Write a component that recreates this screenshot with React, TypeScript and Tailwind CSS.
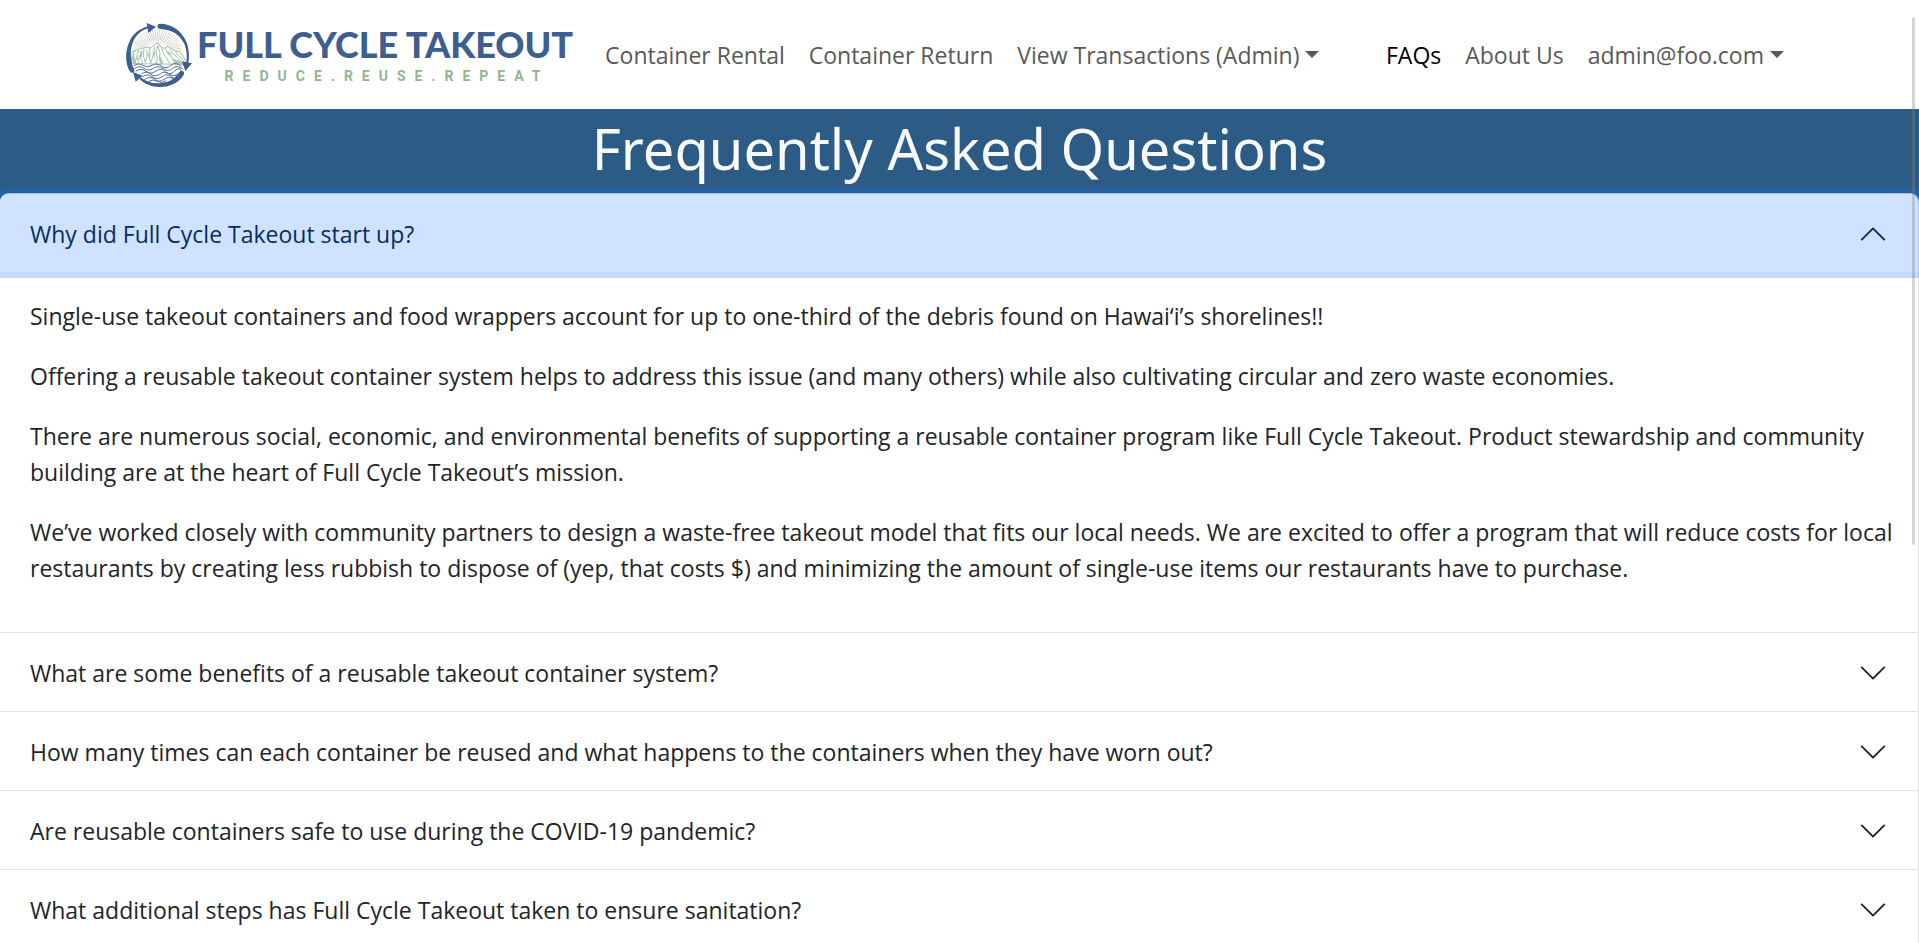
import { useState } from "react";

const rays = Array.from({ length: 31 }, (_, i) => {
  const a = Math.PI + (Math.PI * i) / 30;
  const inner = i % 2 === 0 ? 32 : 40;
  return {
    x1: 142 + Math.cos(a) * inner,
    y1: 126 + Math.sin(a) * inner,
    x2: 142 + Math.cos(a) * 73,
    y2: 126 + Math.sin(a) * 73,
  };
});

const faqs: { question: string; answer: string[] }[] = [
  {
    question: "Why did Full Cycle Takeout start up?",
    answer: [
      "Single-use takeout containers and food wrappers account for up to one-third of the debris found on Hawai‘i’s shorelines!!",
      "Offering a reusable takeout container system helps to address this issue (and many others) while also cultivating circular and zero waste economies.",
      "There are numerous social, economic, and environmental benefits of supporting a reusable container program like Full Cycle Takeout. Product stewardship and community building are at the heart of Full Cycle Takeout’s mission.",
      "We’ve worked closely with community partners to design a waste-free takeout model that fits our local needs. We are excited to offer a program that will reduce costs for local restaurants by creating less rubbish to dispose of (yep, that costs $) and minimizing the amount of single-use items our restaurants have to purchase.",
    ],
  },
  { question: "What are some benefits of a reusable takeout container system?", answer: [] },
  {
    question:
      "How many times can each container be reused and what happens to the containers when they have worn out?",
    answer: [],
  },
  { question: "Are reusable containers safe to use during the COVID-19 pandemic?", answer: [] },
  { question: "What additional steps has Full Cycle Takeout taken to ensure sanitation?", answer: [] },
];

function LogoMark() {
  return (
    <svg viewBox="39 33 210 198" className="h-[66px] w-[70px] shrink-0" fill="none" aria-hidden="true">
      <g stroke="#c4c1b8" strokeWidth="2">
        {rays.map((r, i) => (
          <line key={i} x1={r.x1} y1={r.y1} x2={r.x2} y2={r.y2} />
        ))}
      </g>
      <path
        d="M64 158 L66 122 L78 118 L88 114 L98 112 L108 109 L120 111 L130 104 L137 97 L146 97 L152 108 L162 112 L172 107 L184 112 L194 120 L206 122 L216 130 L228 152 L224 160 Z"
        fill="#ffffff"
        stroke="#8fb596"
        strokeWidth="2.5"
        strokeLinejoin="round"
      />
      <g stroke="#8fb596" strokeWidth="2.5" strokeLinecap="round" strokeLinejoin="round">
        <path d="M72 122 L70 140 L76 156 L80 134 L86 118 M84 154 L88 136 L94 122 L92 142 L98 156 M102 114 L100 134 L106 154 L112 132 L110 116" />
        <path d="M120 112 L116 134 L122 156 L128 138 L134 108 M138 158 L142 140 L138 122 L144 104 L150 126 L148 144 L154 160" />
        <path d="M156 112 L160 128 L170 142 L178 156 M166 112 L174 128 L188 142 L198 158 M180 114 L188 128 L202 138 L214 156 M196 122 L206 134 L220 148" />
      </g>
      <g fill="#a9c9ae">
        <path d="M66 140 L72 128 L76 156 L68 156 Z M92 120 L98 118 L96 134 L90 138 Z M116 128 L122 122 L120 142 Z M130 128 L136 118 L134 146 Z M148 134 L154 140 L160 158 L150 158 Z" />
        <path d="M184 142 L198 146 L222 154 L222 164 L196 158 Z M170 118 L182 126 L186 134 L174 128 Z M80 144 L84 134 L86 150 Z" />
      </g>
      <g stroke="#566f97" strokeWidth="3" strokeLinecap="round">
        <path d="M72 164 Q84 154 98 163 T126 163 T154 165 T182 163 T214 166" />
        <path d="M74 172 Q88 162 102 172 T130 172 T160 173 T188 172 T218 174" />
        <path d="M78 180 Q94 170 108 181 T138 180 T166 182 T194 180 T214 182" />
        <path d="M96 188 Q108 178 122 189 T150 189 T178 189 T204 188" />
        <path d="M98 197 Q112 186 126 197 T156 197 T184 197 T200 194" />
        <path d="M104 205 Q120 194 134 205 T162 205 T188 203" />
        <path d="M116 211 Q128 203 142 211 T168 210" />
      </g>
      <g fill="#3d5f8f">
        <path d="M61 184 C44 158 44 116 62 84 C74 64 92 52 114 46 L116 51 C94 58 80 70 71 88 C59 114 59 150 73 176 C75 183 66 188 61 184 Z" />
        <path d="M110 36 L138 47 L115 66 Z" />
        <path d="M150 38 C184 38 214 58 229 92 C237 112 239 134 235 156 L229 155 C232 134 230 116 223 98 C209 70 184 56 152 54 C140 54 140 38 150 38 Z" />
        <path d="M216 151 L246 157 L226 180 Z" />
        <path d="M222 190 C208 216 178 229 148 228 C124 227 104 219 88 203 L92 199 C108 212 126 218 148 217 C174 216 196 204 208 184 C213 176 226 180 222 190 Z" />
        <path d="M69 183 L98 194 L77 212 Z" />
      </g>
    </svg>
  );
}

function Caret() {
  return (
    <svg viewBox="0 0 14 7" className="h-[7px] w-[14px]" fill="currentColor" aria-hidden="true">
      <path d="M0 0h14L7 7z" />
    </svg>
  );
}

function Chevron({ open }: { open: boolean }) {
  return (
    <svg
      viewBox="0 0 16 16"
      className={open ? "size-[30px] shrink-0 rotate-180" : "size-[30px] shrink-0"}
      fill="currentColor"
      aria-hidden="true"
    >
      <path
        fillRule="evenodd"
        d="M1.646 4.646a.5.5 0 0 1 .708 0L8 10.293l5.646-5.647a.5.5 0 0 1 .708.708l-6 6a.5.5 0 0 1-.708 0l-6-6a.5.5 0 0 1 0-.708z"
      />
    </svg>
  );
}

function Navbar() {
  return (
    <header className="flex h-[109px] items-center justify-between pr-[135px] pl-[123px] text-[23px] leading-9 text-[#595959]">
      <div className="flex items-center">
        <a href="#home" className="flex items-center gap-1 pr-5" aria-label="Full Cycle Takeout home">
          <LogoMark />
          <span className="flex flex-col items-center gap-1.5">
            <span className="font-[Lato] text-[36px] leading-9 font-black whitespace-nowrap text-[#3d5f8f]">
              FULL CYCLE TAKEOUT
            </span>
            <span className="pl-1 font-[Roboto] text-[14px] leading-4 font-bold tracking-[9px] whitespace-nowrap text-[#93b591]">
              REDUCE.REUSE.REPEAT
            </span>
          </span>
        </a>
        <nav className="flex whitespace-nowrap" aria-label="Containers">
          <a href="#rental" className="px-3">Container Rental</a>
          <a href="#return" className="px-3">Container Return</a>
          <button type="button" className="flex items-center gap-1.5 px-3">
            View Transactions (Admin)
            <Caret />
          </button>
        </nav>
      </div>
      <nav className="flex whitespace-nowrap" aria-label="Account">
        <a href="#faqs" aria-current="page" className="px-3 text-black">FAQs</a>
        <a href="#about" className="px-3">About Us</a>
        <button type="button" className="flex items-center gap-1.5 pl-3">
          admin@foo.com
          <Caret />
        </button>
      </nav>
    </header>
  );
}

export default function App() {
  const [openIndex, setOpenIndex] = useState(0);

  return (
    <div className="relative h-screen overflow-hidden bg-white font-['Open_Sans',sans-serif] text-[#212529]">
      <div className="h-full overflow-x-hidden overflow-y-auto [scrollbar-width:none]">
        <Navbar />
        <main className="bg-[#2c5b85]">
          <h1 className="pt-[3px] pb-[9px] text-center font-['Noto_Sans',sans-serif] text-[56px] leading-[72px] text-[#f8f9fa]">
            Frequently Asked Questions
          </h1>
          <div className="rounded-t-[9px] border-t border-r border-[#dee2e6] bg-white">
            {faqs.map((faq, i) => {
              const open = i === openIndex;
              return (
                <section key={faq.question} className={i === 0 ? "" : "border-t border-[#dee2e6]"}>
                  <h2>
                    <button
                      type="button"
                      aria-expanded={open}
                      onClick={() => setOpenIndex(open ? -1 : i)}
                      className={
                        (open ? "relative z-10 bg-[#cfe2ff] text-[#052c65] ring-[6px] ring-[#0d6efd]/25 " : "") +
                        (i === 0 ? "rounded-t-[8px] " : "") +
                        "flex h-[78px] w-full items-center justify-between px-[30px] pt-0.5 text-left text-[23px] leading-7 outline-none"
                      }
                    >
                      {faq.question}
                      <Chevron open={open} />
                    </button>
                  </h2>
                  {open && (
                    <div className="pt-[26px] pr-3 pb-[22px] pl-[30px] text-[23px] leading-9">
                      {faq.answer.map((p) => (
                        <p key={p} className="mb-6">{p}</p>
                      ))}
                    </div>
                  )}
                </section>
              );
            })}
          </div>
        </main>
      </div>
      <div className="pointer-events-none absolute top-[17px] right-1 z-20 h-[528px] w-[3px] rounded-full bg-[#808080]/35" />
    </div>
  );
}
